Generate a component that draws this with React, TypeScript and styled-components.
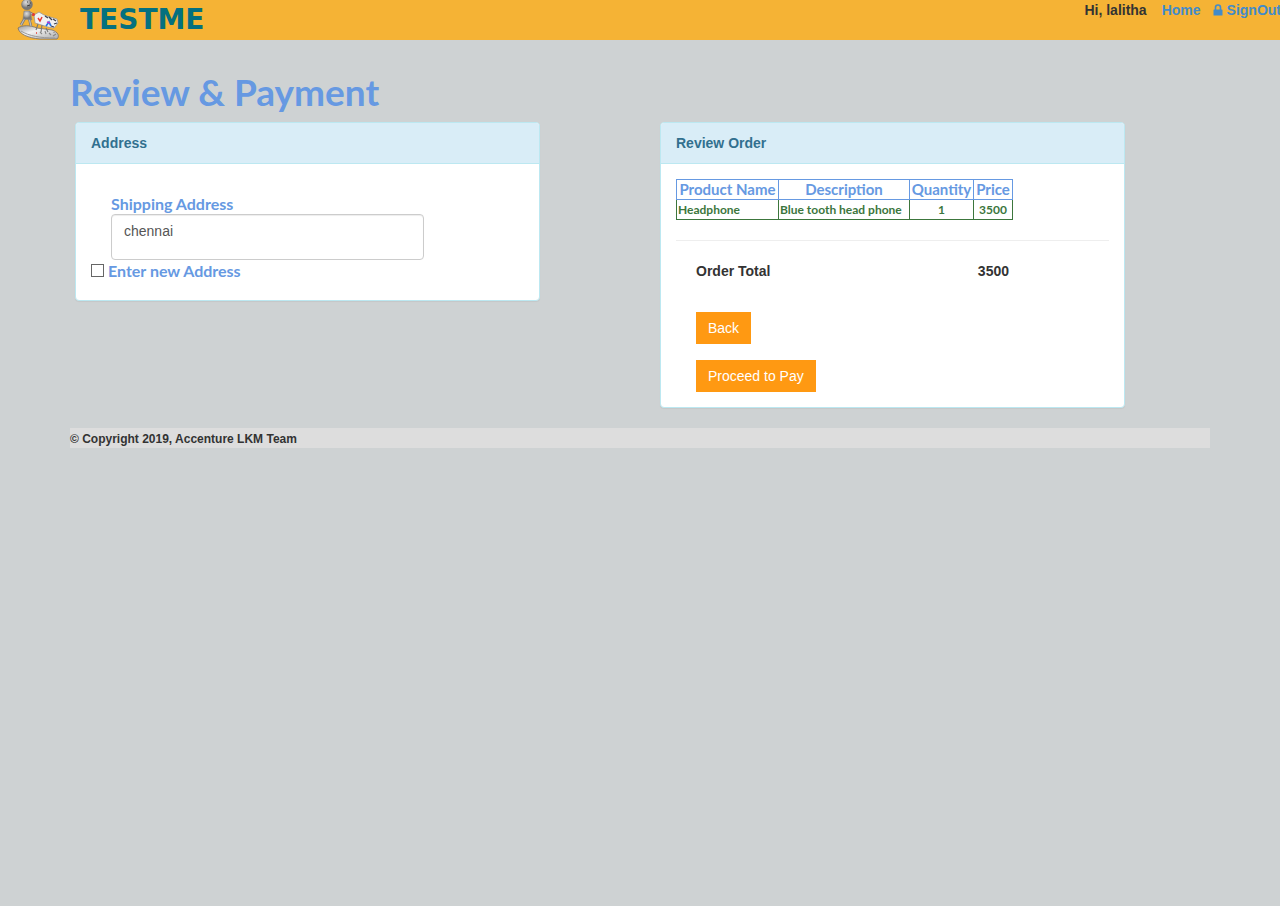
import React from "react";
import styled, { createGlobalStyle } from "styled-components";

const humanist = `"Trebuchet MS", Lato, "Open Sans", sans-serif`;

const GlobalStyle = createGlobalStyle`
  *, *::before, *::after { box-sizing: border-box; }
  body {
    margin: 0;
    background: #ced2d3;
    color: #333;
    font: 14px/20px "Helvetica Neue", "Liberation Sans", Arial, sans-serif;
  }
`;

const TopBar = styled.header`
  display: flex;
  justify-content: space-between;
  align-items: flex-start;
  height: 40px;
  overflow: hidden;
  background: #f5b335;
`;

const Brand = styled.a`
  display: flex;
  align-items: center;
  gap: 20px;
  height: 40px;
  padding-left: 16px;
  color: #05707f;
  text-decoration: none;
`;

const BrandName = styled.span`
  font: bold 28px/38px "DejaVu Sans", sans-serif;
`;

const UserNav = styled.nav`
  display: flex;
  margin-right: -1px;
  font-weight: bold;
`;

const Greeting = styled.span`
  margin-right: 15px;
`;

const NavLink = styled.a`
  display: flex;
  align-items: center;
  gap: 4px;
  color: #428bca;
  text-decoration: none;

  & + & { margin-left: 12px; }
`;

const Container = styled.div`
  padding: 0 70px;
`;

const Title = styled.h1`
  margin: 32px 0 10px;
  color: #6699e2;
  font: bold 37px/40px ${humanist};
`;

const Columns = styled.main`
  display: grid;
  grid-template-columns: 1fr 1fr;
  align-items: start;
  gap: 120px;
  margin: 0 85px 20px 5px;
`;

const Panel = styled.section`
  background: #fff;
  border: 1px solid #bce8f1;
  border-radius: 4px;
  box-shadow: 0 1px 1px rgba(0, 0, 0, 0.05);
`;

const PanelHeading = styled.h2`
  margin: 0;
  padding: 10px 15px;
  border-bottom: 1px solid #bce8f1;
  border-radius: 3px 3px 0 0;
  background: #d9edf7;
  color: #31708f;
  font-size: 14px;
  line-height: 20px;
`;

const PanelBody = styled.div`
  padding: 15px;
`;

const AddressField = styled.div`
  display: flex;
  flex-direction: column;
  padding: 15px 100px 0 20px;
`;

const FieldLabel = styled.label`
  color: #6699e2;
  font: bold 16px/20px ${humanist};
`;

const AddressBox = styled.textarea`
  width: 100%;
  height: 46px;
  padding: 6px 12px;
  border: 1px solid #ccc;
  border-radius: 4px;
  background: #fff;
  box-shadow: inset 0 1px 1px rgba(0, 0, 0, 0.075);
  color: #555;
  font: inherit;
  resize: none;
`;

const CheckRow = styled.div`
  display: flex;
  align-items: center;
  gap: 4px;
  padding: 1px 0 4px;
`;

const CheckBox = styled.input`
  appearance: none;
  width: 13px;
  height: 13px;
  margin: 0 0 2px;
  border: 1px solid #666;
  background: #fff;

  &:checked { background: #6699e2; }
`;

const OrderTable = styled.table`
  width: 337px;
  max-width: 100%;
  table-layout: fixed;
  border-collapse: collapse;
  white-space: nowrap;
`;

const HeadCell = styled.th`
  height: 20px;
  padding: 0;
  border: 1px solid #6699e2;
  color: #6699e2;
  font: bold 15px/19px ${humanist};
`;

const Cell = styled.td<{ $center?: boolean }>`
  height: 20px;
  padding: 0 1px;
  border: 1px solid #3c763d;
  border-top-color: #6699e2;
  color: #3c763d;
  font: bold 12px/19px ${humanist};
  text-align: ${(p) => (p.$center ? "center" : "left")};
`;

const Divider = styled.hr`
  margin: 20px 0;
  border: 0;
  border-top: 1px solid #eee;
`;

const Total = styled.div`
  display: flex;
  justify-content: space-between;
  padding: 0 100px 0 20px;
  font-weight: bold;
`;

const Actions = styled.div`
  display: flex;
  flex-direction: column;
  align-items: flex-start;
  gap: 16px;
  padding: 31px 20px 0;
`;

const Button = styled.button`
  height: 32px;
  padding: 0 12px;
  border: 0;
  background: #ff9912;
  color: #fff;
  font: inherit;
  cursor: pointer;
`;

const Footer = styled.footer`
  padding-top: 2px;
  background: #ddd;
  font-size: 12px;
  font-weight: bold;
  line-height: 18px;
`;

const Mascot = () => (
  <svg width="44" height="40" viewBox="0 0 44 40" aria-hidden="true">
    <defs>
      <radialGradient id="metal" cx="40%" cy="30%">
        <stop offset="0" stopColor="#ddd" />
        <stop offset="0.6" stopColor="#aaa" />
        <stop offset="1" stopColor="#777" />
      </radialGradient>
      <linearGradient id="shell" x1="0" y1="0" x2="1" y2="1">
        <stop offset="0" stopColor="#999" />
        <stop offset="0.4" stopColor="#f2f2f2" />
        <stop offset="1" stopColor="#aaa" />
      </linearGradient>
    </defs>
    <path d="M2 28C6 25 14 25 21 28L36 30C42 32 44 36 41 39L24 39C12 38 3 34 2 28Z" fill="url(#shell)" stroke="#77706a" strokeWidth="0.8" />
    <path d="M5 31C13 36 24 38 39 38" fill="none" stroke="#999" />
    <path d="M18 15L23 12 28 15 34 17 41 19 42 23 38 28 32 27 19 23Z" fill="#f1f1f1" stroke="#999" strokeWidth="0.8" />
    <path d="M29 16l3 2M33 17l3 3M37 19l3 2M38 24l3-1M35 26l3 1" stroke="#3d4250" strokeWidth="1.3" />
    <path d="M22 24l-2 6M26 25l-1 7M30 28l2 4" stroke="#777" strokeWidth="1.1" />
    <path d="M22 18l2 3 2-4" fill="none" stroke="#e8392e" strokeWidth="1.5" />
    <path d="M30 26l3-4 2 4" fill="none" stroke="#2878e4" strokeWidth="1.7" />
    <path d="M31 22l3 1" stroke="#b23bd0" strokeWidth="1.5" />
    <path d="M20 33h1" stroke="#e8392e" strokeWidth="1.5" />
    <path d="M24 32l2 2M29 31l1 3M33 33l2 2M37 36l3-2M38 32v1" fill="none" stroke="#888" strokeWidth="1.1" />
    <path d="M9 18L5 25M13 18l2 8M14 13l4 2" fill="none" stroke="#777" strokeWidth="2.6" />
    <path d="M9 18L5 25M13 18l2 8M14 13l4 2" fill="none" stroke="#bbb" strokeWidth="1.2" />
    <path d="M8 11h6l2 9-9-1Z" fill="url(#metal)" stroke="#888" strokeWidth="0.6" />
    <circle cx="11" cy="4.500" r="5.400" fill="url(#metal)" stroke="#777" strokeWidth="0.6" />
    <path d="M11 2h1M14 3h1M11 6l3-1" stroke="#333" strokeWidth="0.9" />
    <circle cx="17.500" cy="14.500" r="1.500" fill="#e8392e" />
  </svg>
);

const Lock = () => (
  <svg width="10" height="12" viewBox="0 0 10 12" aria-hidden="true">
    <path d="M2.500 6V3.500a2.500 2.500 0 0 1 5 0V6" fill="none" stroke="currentColor" strokeWidth="1.600" />
    <rect x="0.500" y="5.500" width="9" height="6" rx="0.600" fill="currentColor" />
  </svg>
);

export default function App() {
  return (
    <>
      <GlobalStyle />
      <TopBar>
        <Brand href="#">
          <Mascot />
          <BrandName>TESTME</BrandName>
        </Brand>
        <UserNav>
          <Greeting>Hi, lalitha</Greeting>
          <NavLink href="#">Home</NavLink>
          <NavLink href="#">
            <Lock />
            SignOut
          </NavLink>
        </UserNav>
      </TopBar>
      <Container>
        <Title>Review &amp; Payment</Title>
        <Columns>
          <Panel>
            <PanelHeading>Address</PanelHeading>
            <PanelBody>
              <AddressField>
                <FieldLabel htmlFor="shipping">Shipping Address</FieldLabel>
                <AddressBox id="shipping" defaultValue="chennai" />
              </AddressField>
              <CheckRow>
                <CheckBox type="checkbox" id="new-address" />
                <FieldLabel htmlFor="new-address">Enter new Address</FieldLabel>
              </CheckRow>
            </PanelBody>
          </Panel>
          <Panel>
            <PanelHeading>Review Order</PanelHeading>
            <PanelBody>
              <OrderTable>
                <colgroup>
                  <col style={{ width: 102 }} />
                  <col style={{ width: 131 }} />
                  <col style={{ width: 64 }} />
                  <col style={{ width: 39 }} />
                </colgroup>
                <thead>
                  <tr>
                    <HeadCell>Product Name</HeadCell>
                    <HeadCell>Description</HeadCell>
                    <HeadCell>Quantity</HeadCell>
                    <HeadCell>Price</HeadCell>
                  </tr>
                </thead>
                <tbody>
                  <tr>
                    <Cell>Headphone</Cell>
                    <Cell>Blue tooth head phone</Cell>
                    <Cell $center>1</Cell>
                    <Cell $center>3500</Cell>
                  </tr>
                </tbody>
              </OrderTable>
              <Divider />
              <Total>
                <span>Order Total</span>
                <span>3500</span>
              </Total>
              <Actions>
                <Button type="button">Back</Button>
                <Button type="button">Proceed to Pay</Button>
              </Actions>
            </PanelBody>
          </Panel>
        </Columns>
        <Footer>© Copyright 2019, Accenture LKM Team</Footer>
      </Container>
    </>
  );
}
